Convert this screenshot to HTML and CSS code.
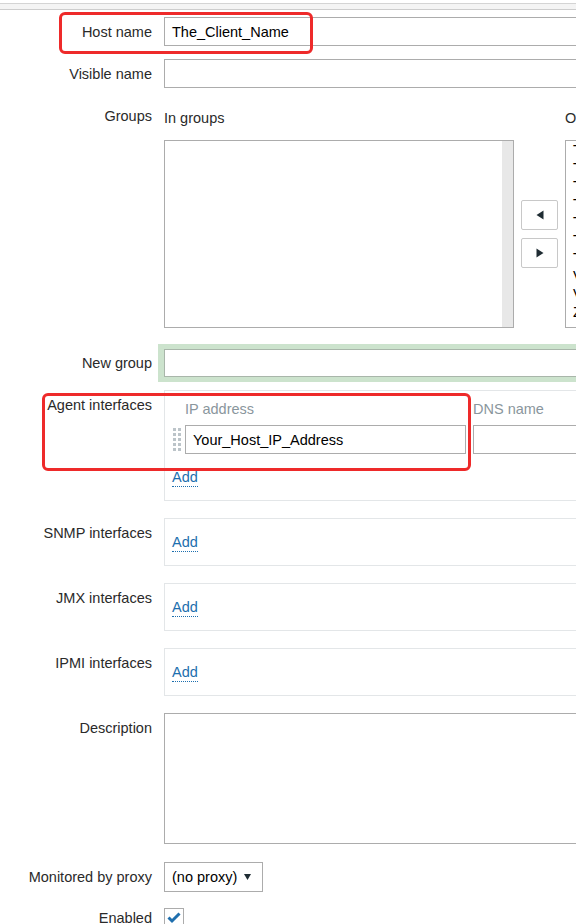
FILE: index.html
```html
<!DOCTYPE html>
<html>
<head>
<meta charset="utf-8">
<title>Host</title>
<link rel="stylesheet" href="styles.css">
</head>
<body>
<div class="topbar"></div>
<div class="form">
  <div class="row">
    <div class="lbl mid">Host name</div>
    <div class="input full">The_Client_Name</div>
  </div>

  <div class="row gap13">
    <div class="lbl mid">Visible name</div>
    <div class="input full"></div>
  </div>

  <div class="row gap13">
    <div class="lbl top">Groups</div>
    <div class="groups">
      <div class="ghead">In groups</div>
      <div></div>
      <div class="ghead">Other groups</div>
      <div class="listbox">
        <div class="opts"></div>
        <div class="track"></div>
      </div>
      <div class="movers">
        <div class="btn"><svg width="8" height="10" viewBox="0 0 8 10"><path d="M7.5 0.5 L0.5 5 L7.5 9.5 Z" fill="#1f2c33"/></svg></div>
        <div class="btn"><svg width="8" height="10" viewBox="0 0 8 10"><path d="M0.5 0.5 L7.5 5 L0.5 9.5 Z" fill="#1f2c33"/></svg></div>
      </div>
      <div class="listbox">
        <div class="opts">
          <div>Templates</div>
          <div>Templates/Applications</div>
          <div>Templates/Databases</div>
          <div>Templates/Modules</div>
          <div>Templates/Network devices</div>
          <div>Templates/Operating systems</div>
          <div>Templates/Virtualization</div>
          <div>Virtual machines</div>
          <div>Virtual servers</div>
          <div>Zabbix servers</div>
        </div>
      </div>
    </div>
  </div>

  <div class="row gap16">
    <div class="lbl mid">New group</div>
    <div class="newgroup"><div class="input full short"></div></div>
  </div>

  <div class="row gap8">
    <div class="lbl top">Agent interfaces</div>
    <div class="ifbox">
      <div class="iface">
        <div></div>
        <div class="ihead">IP address</div>
        <div class="ihead dns">DNS name</div>
        <div class="handle"><svg width="9" height="24" viewBox="0 0 9 24">
          <g fill="#bcc4c9">
            <rect x="0" y="0" width="3" height="3"/><rect x="5" y="0" width="3" height="3"/>
            <rect x="0" y="5" width="3" height="3"/><rect x="5" y="5" width="3" height="3"/>
            <rect x="0" y="10" width="3" height="3"/><rect x="5" y="10" width="3" height="3"/>
            <rect x="0" y="15" width="3" height="3"/><rect x="5" y="15" width="3" height="3"/>
            <rect x="0" y="20" width="3" height="3"/><rect x="5" y="20" width="3" height="3"/>
          </g></svg></div>
        <div class="input">Your_Host_IP_Address</div>
        <div class="dns"><div class="input"></div></div>
      </div>
      <div class="addline"><span class="add">Add</span></div>
    </div>
  </div>

  <div class="row gap17">
    <div class="lbl top">SNMP interfaces</div>
    <div class="ifbox empty"><span class="add">Add</span></div>
  </div>

  <div class="row gap17">
    <div class="lbl top">JMX interfaces</div>
    <div class="ifbox empty"><span class="add">Add</span></div>
  </div>

  <div class="row gap17">
    <div class="lbl top">IPMI interfaces</div>
    <div class="ifbox empty"><span class="add">Add</span></div>
  </div>

  <div class="row gap17">
    <div class="lbl top">Description</div>
    <div class="textarea"></div>
  </div>

  <div class="row gap18">
    <div class="lbl mid">Monitored by proxy</div>
    <div class="select"><span>(no proxy)</span><svg width="7" height="6" viewBox="0 0 7 6"><path d="M0 0 H7 L3.5 6 Z" fill="#1f2c33"/></svg></div>
  </div>

  <div class="row gap16">
    <div class="lbl mid">Enabled</div>
    <div class="check"><svg width="18" height="18" viewBox="0 0 18 18"><path d="M3.5 8.5 L7 12 L14.5 4.5" fill="none" stroke="#1f6fae" stroke-width="3"/></svg></div>
  </div>
</div>

<div class="mark mark-host"></div>
<div class="mark mark-agent"></div>
</body>
</html>
```

FILE: styles.css
```css
html, body {
  margin: 0;
  padding: 0;
}

body {
  width: 576px;
  height: 924px;
  overflow: hidden;
  position: relative;
  background: #ffffff;
  font-family: "Liberation Sans", Arial, sans-serif;
  font-size: 14.5px;
  color: #2a2a2a;
}

.topbar {
  margin-top: 3px;
  height: 5px;
  border-top: 1px solid #d4d4d4;
  border-bottom: 1px solid #cdcdcd;
  background: #f4f4f4;
}

.form {
  width: 1100px;
  padding-top: 7px;
}

.row {
  display: grid;
  grid-template-columns: 152px 1fr;
  column-gap: 12px;
}

.gap8 { margin-top: 8px; }
.gap13 { margin-top: 13px; }
.gap16 { margin-top: 16px; }
.gap17 { margin-top: 17px; }
.gap18 { margin-top: 18px; }

.lbl {
  text-align: right;
  line-height: 18px;
  white-space: nowrap;
}

.lbl.top {
  padding-top: 6px;
}

.lbl.mid {
  align-self: center;
}

.input {
  height: 29px;
  box-sizing: border-box;
  border: 1px solid #acacac;
  background: #ffffff;
  padding: 0 7px;
  line-height: 28px;
  color: #000000;
  white-space: nowrap;
  overflow: hidden;
}

.input.full {
  width: 820px;
}

.input.short {
  height: 28px;
  line-height: 26px;
  border-color: #a9b6aa;
}

/* Groups */
.groups {
  display: grid;
  grid-template-columns: 350px 37px 350px;
  column-gap: 7px;
  row-gap: 13px;
}

.ghead {
  padding-top: 8px;
  line-height: 18px;
  white-space: nowrap;
}

.listbox {
  height: 188px;
  box-sizing: border-box;
  border: 1px solid #acacac;
  display: flex;
  background: #ffffff;
}

.opts {
  flex: 1;
  padding: 0 7px;
  line-height: 18px;
  white-space: nowrap;
  overflow: hidden;
  color: #000000;
}

.track {
  width: 11px;
  background: #e8e8e8;
}

.movers {
  align-self: center;
  display: flex;
  flex-direction: column;
  gap: 8px;
}

.btn {
  width: 37px;
  height: 30px;
  box-sizing: border-box;
  border: 1px solid #c8c8c8;
  border-radius: 2px;
  background: #ffffff;
  display: flex;
  align-items: center;
  justify-content: center;
}

.btn svg {
  display: block;
}

/* New group */
.newgroup {
  margin-left: -6px;
  padding: 5px 0 5px 6px;
  background: #cce3cd;
}

/* Interfaces */
.ifbox {
  width: 900px;
  border: 1px solid #e3e6e8;
  padding: 9px 0 13px 7px;
}

.ifbox.empty {
  padding-top: 15px;
}

.iface {
  display: grid;
  grid-template-columns: 13px 281px 320px;
  row-gap: 7px;
}

.ihead {
  line-height: 18px;
  color: #8a969d;
  white-space: nowrap;
}

.dns {
  padding-left: 7px;
}

.handle {
  display: flex;
  align-items: center;
  padding-left: 1px;
}

.handle svg {
  display: block;
}

.addline {
  margin-top: 15px;
  height: 18px;
}

.add {
  display: inline-block;
  line-height: 17px;
  color: #1d6fae;
  border-bottom: 1px dotted #1d6fae;
}

/* Description */
.textarea {
  width: 820px;
  height: 131px;
  box-sizing: border-box;
  border: 1px solid #acacac;
  background: #ffffff;
}

/* Proxy select */
.select {
  width: 99px;
  height: 30px;
  box-sizing: border-box;
  border: 1px solid #acacac;
  display: flex;
  align-items: center;
  justify-content: space-between;
  padding: 0 11px 0 7px;
  color: #000000;
  white-space: nowrap;
}

.select svg {
  display: block;
}

/* Checkbox */
.check {
  width: 20px;
  height: 20px;
  box-sizing: border-box;
  border: 1px solid #acacac;
  display: flex;
  align-items: center;
  justify-content: center;
}

.check svg {
  display: block;
}

/* Annotation overlays */
.mark {
  position: absolute;
  box-sizing: border-box;
  border: 3px solid #ee2a2a;
  border-radius: 6px;
}

.mark-host {
  left: 59px;
  top: 12px;
  width: 254px;
  height: 42px;
}

.mark-agent {
  left: 42px;
  top: 393px;
  width: 429px;
  height: 78px;
}
```
